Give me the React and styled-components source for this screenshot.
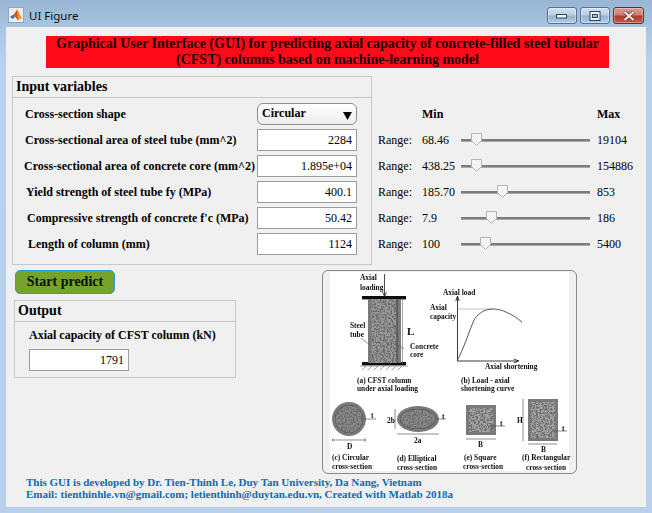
import React from "react";
import styled, { createGlobalStyle } from "styled-components";

const Global = createGlobalStyle`
  html, body { margin: 0; padding: 0; background: #b9d1ea; }
  * { box-sizing: border-box; }
`;

const Serif = `"Liberation Serif", "Times New Roman", serif`;

const Window = styled.div`
  width: 652px;
  height: 513px;
  padding: 0 6px 6px;
  overflow: hidden;
  display: flex;
  flex-direction: column;
  background: linear-gradient(180deg, #97b5d4 0px, #a9c4e0 27px, #b9d1ea 60px, #b9d0ea 100%);
  font-family: ${Serif};
  color: #000;
`;

const TitleBar = styled.div`
  height: 27px;
  flex: none;
  display: flex;
  align-items: flex-start;
  padding: 7px 2px 0 2px;
`;

const AppIcon = styled.svg`
  width: 16px;
  height: 16px;
  flex: none;
  margin-top: 0;
`;

const TitleText = styled.span`
  font-family: "Noto Sans", "Open Sans", sans-serif;
  font-size: 11.5px;
  line-height: 18px;
  margin-left: 5px;
  color: #111;
`;

const Controls = styled.div`
  margin-left: auto;
  display: flex;
  gap: 3px;
`;

const Control = styled.div`
  width: ${(p) => (p.$close ? 31 : 30)}px;
  height: 17px;
  border: 1px solid ${(p) => (p.$close ? "#6b2a26" : "#566f8c")};
  border-radius: 3px;
  display: flex;
  align-items: center;
  justify-content: center;
  box-shadow: inset 0 0 0 1px rgba(255, 255, 255, 0.35);
  background: ${(p) =>
    p.$close
      ? "linear-gradient(180deg, #dc9c90 0%, #cc7d70 45%, #b23a2c 55%, #c85a45 100%)"
      : "linear-gradient(180deg, #d2e1f0 0%, #b9cfe5 45%, #94b3d2 55%, #b3cce4 100%)"};
`;

const Content = styled.div`
  flex: 1;
  background: #f0f0f0;
  display: flex;
  flex-direction: column;
`;

const Banner = styled.h1`
  margin: 9px 0 0 40px;
  width: 563px;
  height: 32px;
  background: #ff0a19;
  font: bold 14px/16px ${Serif};
  text-align: center;
  color: #1c0000;
`;

const TopSection = styled.div`
  margin: 8px 0 0 6px;
  display: flex;
`;

const Panel = styled.section`
  border: 1px solid #c8c8c8;
  width: ${(p) => p.$width}px;
  height: ${(p) => p.$height}px;
`;

const PanelTitle = styled.div`
  height: 21px;
  border-bottom: 1px solid #c8c8c8;
  padding-left: 3px;
  font: bold 14px/20px ${Serif};
`;

const Rows = styled.div`
  padding-top: 3px;
`;

const FormRow = styled.div`
  height: 26px;
  display: flex;
  align-items: center;
  justify-content: space-between;
  padding: 0 14px 0 ${(p) => p.$indent}px;
`;

const Label = styled.label`
  font: bold 12px/16px ${Serif};
  white-space: nowrap;
`;

const Field = styled.input`
  display: block;
  width: 100px;
  height: 22px;
  padding: 0 4px 0 0;
  margin: 0;
  border: 1px solid #9c9c9c;
  background: #fff;
  text-align: right;
  font: 12px ${Serif};
  color: #000;
  outline: none;
`;

const Dropdown = styled.div`
  width: 100px;
  height: 22px;
  border: 1px solid #8e8e8e;
  border-radius: 6px;
  background: linear-gradient(180deg, #ffffff, #ececec);
  display: flex;
  align-items: center;
  justify-content: space-between;
  padding: 0 4px 3px 4px;
  font: bold 12px/14px ${Serif};
`;

const DropArrow = styled.svg`
  width: 9px;
  height: 8px;
  margin-top: 6px;
`;

const RangeColumn = styled.div`
  padding: 25px 0 0 6px;
`;

const RangeRow = styled.div`
  height: 26px;
  display: grid;
  grid-template-columns: 44px 39px 129px auto;
  column-gap: 0;
  align-items: center;
  font: 12px/16px ${Serif};
  white-space: nowrap;
`;

const MaxCell = styled.span`
  padding-left: 7px;
  font-weight: ${(p) => (p.$bold ? "bold" : "normal")};
`;

const MinHead = styled.span`
  font-weight: bold;
  grid-column: 2;
`;

const Track = styled.div`
  position: relative;
  height: 3px;
  background: linear-gradient(180deg, #7d7d7d 0 2px, #a8a8a8 2px);
`;

const Thumb = styled.svg`
  position: absolute;
  top: -6px;
  width: 11px;
  height: 13px;
  margin-left: -5.5px;
`;

const BottomSection = styled.div`
  display: flex;
  padding: 5px 0 0 8px;
`;

const LeftColumn = styled.div`
  width: 222px;
  flex: none;
`;

const PredictButton = styled.button`
  display: block;
  width: 100px;
  height: 24px;
  margin: 0 0 6px 1px;
  padding: 0;
  border: 1px solid #2a9be8;
  border-radius: 5px;
  background: #75a429;
  font: bold 14px/20px ${Serif};
  color: #061000;
`;

const OutputBody = styled.div`
  padding: 5px 0 0 14px;
`;

const OutputLabel = styled.div`
  font: bold 12px/16px ${Serif};
  margin-bottom: 6px;
`;

const FigureBox = styled.figure`
  margin: 0 0 0 86px;
  width: 255px;
  height: 204px;
  flex: none;
  border: 1px solid #8a8a8a;
  border-radius: 6px;
  background: #f0f0f0;
  overflow: hidden;
`;

const FigureSvg = styled.svg`
  display: block;
  width: 253px;
  height: 202px;
`;

const Footer = styled.footer`
  padding: 2px 0 0 20px;
  font: bold 11px/12px ${Serif};
  color: #0a6cb8;
  white-space: nowrap;
`;

const inputs = [
  { label: "Cross-sectional area of steel tube (mm^2)", indent: 12, value: "2284" },
  { label: "Cross-sectional area of concrete core (mm^2)", indent: 11, value: "1.895e+04" },
  { label: "Yield strength of steel tube fy (MPa)", indent: 13, value: "400.1" },
  { label: "Compressive strength of concrete f'c (MPa)", indent: 14, value: "50.42" },
  { label: "Length of column (mm)", indent: 15, value: "1124" },
];

const ranges = [
  { min: "68.46", max: "19104", pos: 15 },
  { min: "438.25", max: "154886", pos: 15 },
  { min: "185.70", max: "853", pos: 41 },
  { min: "7.9", max: "186", pos: 30 },
  { min: "100", max: "5400", pos: 24 },
];

const figureText = [
  [360, 279.5, "Axial"], [360, 289.5, "loading"],
  [350, 327.5, "Steel"], [350, 336.5, "tube"],
  [410, 348.5, "Concrete"], [410, 356.5, "core"],
  [357, 382.5, "(a) CFST column"], [357, 390.5, "under axial loading"],
  [443, 294.5, "Axial load"], [430, 309.5, "Axial"], [430, 318.5, "capacity"],
  [485, 368.5, "Axial shortening"],
  [461, 382.5, "(b) Load - axial"], [461, 390.5, "shortening curve"],
  [332, 460, "(c) Circular"], [332, 468.5, "cross-section"],
  [397, 461, "(d) Elliptical"], [397, 469.5, "cross-section"],
  [464, 460, "(e) Square"], [463, 468.5, "cross-section"],
  [522, 460, "(f) Rectangular"], [526, 469.5, "cross-section"],
  [371, 418, "t"], [442, 419, "t"], [500, 426, "t"], [562, 431, "t"],
  [347, 449, "D"], [414, 443, "2a"], [387, 423, "2b"], [478, 447, "B"], [541, 452, "B"], [517, 423, "H"],
];

function Figure() {
  return (
    <FigureSvg viewBox="323 271 253 202" fontFamily={Serif} fontWeight="bold" fontSize="7.4">
      <defs>
        <filter id="soft" x="0" y="0" width="100%" height="100%">
          <feGaussianBlur stdDeviation="0.42" />
        </filter>
        <filter id="grain" x="0" y="0" width="100%" height="100%">
          <feTurbulence type="fractalNoise" baseFrequency="0.55" numOctaves="2" seed="4" result="n" />
          <feColorMatrix in="n" values="0 0 0 0 0.15  0 0 0 0 0.15  0 0 0 0 0.15  6 0 0 0 -2.6" result="d" />
          <feComposite in="d" in2="SourceAlpha" operator="in" result="s" />
          <feMerge>
            <feMergeNode in="SourceGraphic" />
            <feMergeNode in="s" />
          </feMerge>
        </filter>
      </defs>
      <rect x="330" y="272" width="239" height="199" fill="#fff" />
      <g filter="url(#soft)" fill="#111" stroke="none">
        <rect x="362" y="296" width="44" height="3.4" />
        <rect x="362" y="362" width="44" height="3.4" />
        <rect x="368" y="299" width="33" height="64" fill="#7a7a7a" />
        <rect x="371.5" y="299" width="25" height="64" fill="#9a9a9a" filter="url(#grain)" />
        <path d="M397 299V363" stroke="#333" strokeWidth="0.8" fill="none" />
        <path d="M384.5 274V296M382.5 292L384.5 296.5L386.5 292" stroke="#222" strokeWidth="0.8" fill="none" />
        <path d="M402.5 298V364M362 370l4-4M368 370l4-4M374 370l4-4M380 370l4-4M386 370l4-4M392 370l4-4M398 370l4-4M360 366H408" stroke="#666" strokeWidth="0.6" fill="none" />
        <path d="M361 338L370 345M398 345L404 349" stroke="#555" strokeWidth="0.6" fill="none" />
        <text x="407" y="335" fontSize="11">L</text>

        <path d="M457.5 361V297M455.8 301L457.5 296L459.2 301M457.5 361H518M514 359.2L519 361L514 362.8" stroke="#222" strokeWidth="0.9" fill="none" />
        <path d="M457.5 309H492" stroke="#aaa" strokeWidth="0.7" fill="none" />
        <path d="M457.5 360C463 350 469 332 474 320C479 312 486 309 493 309C502 309 512 314 522 322" stroke="#444" strokeWidth="0.9" fill="none" />

        <circle cx="349" cy="419" r="17" fill="#7a7a7a" />
        <circle cx="349" cy="419" r="14" fill="#8a8a8a" stroke="#333" strokeWidth="0.6" filter="url(#grain)" />
        <path d="M332 440H366M333.5 438.8L332 440L333.5 441.2M364.5 438.8L366 440L364.5 441.2M363 419H376" stroke="#444" strokeWidth="0.6" fill="none" />

        <ellipse cx="418" cy="419" rx="21" ry="13" fill="#7a7a7a" />
        <ellipse cx="418" cy="419" rx="18" ry="10" fill="#8a8a8a" stroke="#333" strokeWidth="0.6" filter="url(#grain)" />
        <path d="M397 434H439M395 409V429M436 419H446" stroke="#444" strokeWidth="0.6" fill="none" />

        <rect x="466" y="405" width="30" height="30" fill="#7a7a7a" />
        <rect x="469" y="408" width="24" height="24" fill="#a4a4a4" filter="url(#grain)" />
        <path d="M466 439H496M488 426H505" stroke="#444" strokeWidth="0.6" fill="none" />

        <rect x="528" y="399" width="30" height="42" fill="#7a7a7a" />
        <rect x="531" y="402" width="24" height="36" fill="#a4a4a4" filter="url(#grain)" />
        <path d="M528 444H557M523 399V441M552 431H567" stroke="#444" strokeWidth="0.6" fill="none" />

        {figureText.map(([x, y, t]) => (
          <text key={`${x}-${y}`} x={x} y={y}>{t}</text>
        ))}
      </g>
    </FigureSvg>
  );
}

export default function App() {
  return (
    <Window>
      <Global />
      <TitleBar>
        <AppIcon viewBox="0 0 16 16">
          <rect x="0.5" y="0.5" width="15" height="15" fill="#e9eef4" stroke="#8ea4bb" />
          <path d="M2 10L5.5 7.5L7 9L5 12Z" fill="#2a6fb5" />
          <path d="M5 9L9 2.5C10 3 11.5 8 14 11.5C12 11 11 12.5 10 13.5C8.5 11 7 9.5 5 9Z" fill="#e0541c" />
          <path d="M9 2.5C9.5 6 10 9 10 13.5C11 12.5 12 11 14 11.5C11.5 8 10 3 9 2.5Z" fill="#f29b24" />
        </AppIcon>
        <TitleText>UI Figure</TitleText>
        <Controls>
          <Control>
            <svg width="12" height="6" viewBox="0 0 12 6">
              <rect x="0.5" y="1.5" width="10" height="3.5" fill="#eef3f8" stroke="#33475c" />
            </svg>
          </Control>
          <Control>
            <svg width="12" height="10" viewBox="0 0 12 10">
              <rect x="1" y="0.5" width="10" height="9" fill="#eef3f8" stroke="#33475c" />
              <rect x="3.5" y="3.5" width="5" height="3" fill="#a9c2dc" stroke="#33475c" />
            </svg>
          </Control>
          <Control $close>
            <svg width="14" height="10" viewBox="0 0 14 10">
              <path d="M2.5 1L11.5 9M11.5 1L2.5 9" stroke="#5a2a26" strokeWidth="3.4" />
              <path d="M2.5 1L11.5 9M11.5 1L2.5 9" stroke="#f3ece9" strokeWidth="2.2" />
            </svg>
          </Control>
        </Controls>
      </TitleBar>
      <Content>
        <Banner>
          Graphical User Interface (GUI) for predicting axial capacity of concrete-filled steel tubular
          <br />
          (CFST) columns based on machine-learning model
        </Banner>
        <TopSection>
          <Panel $width={360} $height={189}>
            <PanelTitle>Input variables</PanelTitle>
            <Rows>
              <FormRow $indent={12}>
                <Label>Cross-section shape</Label>
                <Dropdown>
                  Circular
                  <DropArrow viewBox="0 0 9 8">
                    <path d="M0 0H9L4.5 8Z" fill="#000" />
                  </DropArrow>
                </Dropdown>
              </FormRow>
              {inputs.map((r) => (
                <FormRow key={r.label} $indent={r.indent}>
                  <Label>{r.label}</Label>
                  <Field readOnly value={r.value} />
                </FormRow>
              ))}
            </Rows>
          </Panel>
          <RangeColumn>
            <RangeRow>
              <span />
              <MinHead>Min</MinHead>
              <span />
              <MaxCell $bold>Max</MaxCell>
            </RangeRow>
            {ranges.map((r) => (
              <RangeRow key={r.min}>
                <span>Range:</span>
                <span>{r.min}</span>
                <Track>
                  <Thumb viewBox="0 0 11 13" style={{ left: r.pos }}>
                    <path d="M0.5 0.5H10.5V7.5L5.5 12.5L0.5 7.5Z" fill="#f4f4f4" stroke="#b4b4b4" />
                  </Thumb>
                </Track>
                <MaxCell>{r.max}</MaxCell>
              </RangeRow>
            ))}
          </RangeColumn>
        </TopSection>
        <BottomSection>
          <LeftColumn>
            <PredictButton>Start predict</PredictButton>
            <Panel $width={222} $height={78}>
              <PanelTitle>Output</PanelTitle>
              <OutputBody>
                <OutputLabel>Axial capacity of CFST column (kN)</OutputLabel>
                <Field readOnly value="1791" />
              </OutputBody>
            </Panel>
          </LeftColumn>
          <FigureBox>
            <Figure />
          </FigureBox>
        </BottomSection>
        <Footer>
          This GUI is developed by Dr. Tien-Thinh Le, Duy Tan University, Da Nang, Vietnam
          <br />
          Email: tienthinhle.vn@gmail.com; letienthinh@duytan.edu.vn, Created with Matlab 2018a
        </Footer>
      </Content>
    </Window>
  );
}
